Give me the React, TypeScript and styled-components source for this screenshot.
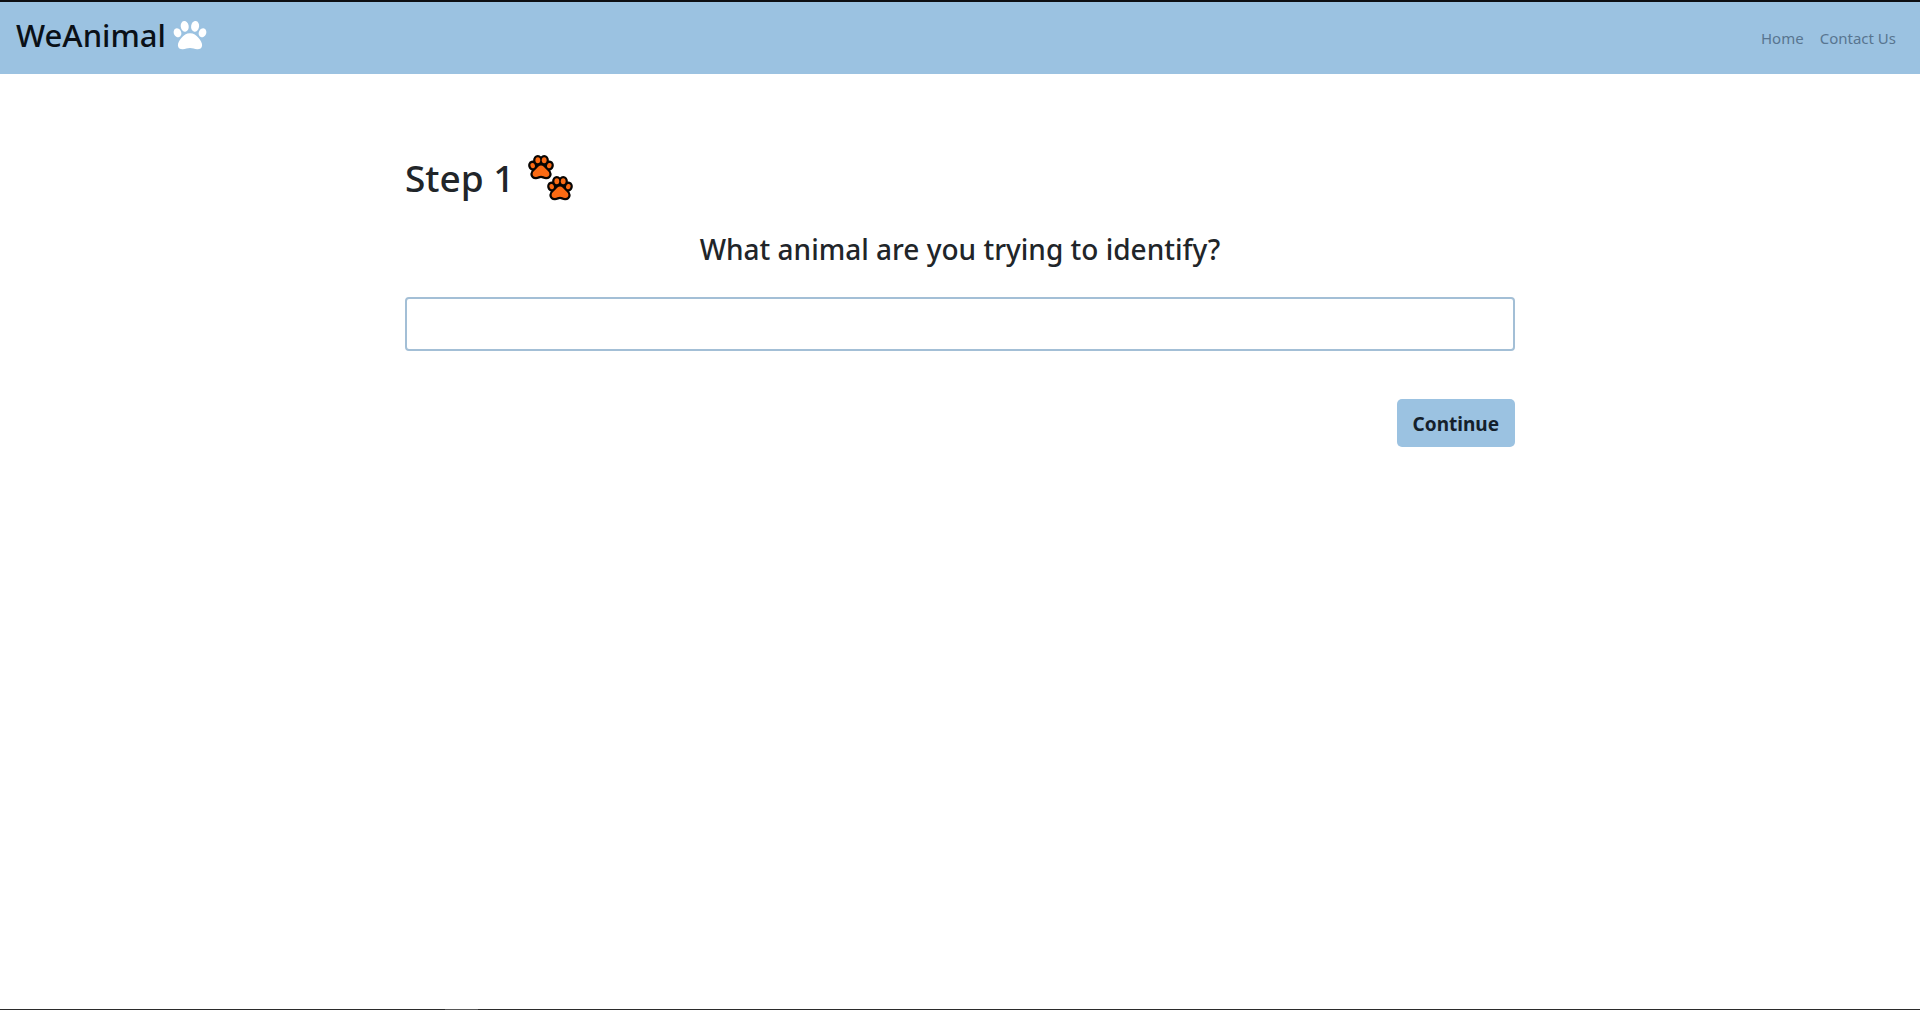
import React from "react";
import styled, { createGlobalStyle } from "styled-components";

const sky = "#9bc2e1";

const GlobalStyle = createGlobalStyle`
  *, *::before, *::after { box-sizing: border-box; }
  body {
    margin: 0;
    background: #fff;
    color: #212529;
    font-family: "Segoe UI", "Noto Sans", "Open Sans", sans-serif;
    font-size: 16px;
    line-height: 24px;
  }
`;

const Page = styled.div`
  min-height: 100vh;
  display: flex;
  flex-direction: column;
  border-top: 2px solid #0d0f12;
`;

const NavBar = styled.header`
  display: flex;
  align-items: center;
  justify-content: space-between;
  padding: 9px 16px 15px;
  background: ${sky};
`;

const Brand = styled.a`
  display: flex;
  align-items: center;
  gap: 7px;
  color: #0a1017;
  font-size: 31px;
  font-weight: 500;
  line-height: 48px;
  text-decoration: none;
`;

const NavLinks = styled.nav`
  display: flex;
  padding-top: 6px;
`;

const NavLink = styled.a`
  padding: 0 8px;
  color: #587590;
  font-size: 15px;
  font-weight: 400;
  text-decoration: none;
`;

const Main = styled.main`
  flex: 1;
  width: 100%;
  max-width: 1140px;
  margin: 0 auto;
  padding: 80px 15px 0;
`;

const StepTitle = styled.h1`
  display: flex;
  align-items: center;
  gap: 14px;
  margin: 0;
  font-size: 37px;
  font-weight: 500;
  line-height: 48px;
`;

const StepForm = styled.form`
  display: flex;
  flex-direction: column;
  padding-top: 24px;
`;

const Question = styled.label`
  margin-bottom: 25px;
  font-size: 28px;
  font-weight: 500;
  line-height: 46px;
  text-align: center;
`;

const AnswerInput = styled.input`
  width: 100%;
  height: 54px;
  padding: 8px 16px;
  border: 2px solid #a3bfd6;
  border-radius: 4px;
  background: #fff;
  color: inherit;
  font: inherit;
  font-size: 20px;
`;

const ContinueButton = styled.button`
  align-self: flex-end;
  margin-top: 48px;
  padding: 9px 16px 7px;
  border: 0;
  border-radius: 5px;
  background: ${sky};
  color: #14202b;
  font-family: inherit;
  font-size: 19px;
  font-weight: 700;
  line-height: 32px;
  cursor: pointer;
`;

const BottomEdge = styled.footer`
  display: flex;
  height: 1px;
  padding-left: 445px;
  background: #2b2b2b;
`;

const ActiveMark = styled.span`
  width: 33px;
  background: #575757;
`;

const BrandPaw = () => (
  <svg width="34" height="30" viewBox="0 0 34 30" fill="#fff" aria-hidden="true">
    <ellipse cx="11.7" cy="6.3" rx="4" ry="5.4" transform="rotate(-8 11.7 6.3)" />
    <ellipse cx="22.1" cy="6.3" rx="4" ry="5.4" transform="rotate(8 22.1 6.3)" />
    <ellipse cx="4.5" cy="12.8" rx="3.7" ry="4.6" transform="rotate(-22 4.5 12.8)" />
    <ellipse cx="29.5" cy="12.8" rx="3.7" ry="4.6" transform="rotate(22 29.5 12.8)" />
    <path d="M17 13.200c-3.600 0-6.300 2-8.400 4.500C6.600 20 4.700 22.600 4.900 25.500c.2 2.800 2.600 4 5 3.800 2.500-.2 4.400-1.300 7.100-1.300s4.600 1.100 7.100 1.300c2.400.2 4.800-1 5-3.800.2-2.900-1.700-5.500-3.700-7.800C23.300 15.200 20.600 13.200 17 13.200z" />
  </svg>
);

const PawPads = () => (
  <>
    <ellipse cx="4.7" cy="10.6" rx="2.2" ry="2.7" transform="rotate(-15 4.7 10.6)" />
    <ellipse cx="21.3" cy="10.6" rx="2.2" ry="2.7" transform="rotate(15 21.3 10.6)" />
    <ellipse cx="9.8" cy="5.3" rx="2.4" ry="3" />
    <ellipse cx="16.2" cy="5.3" rx="2.4" ry="3" />
    <path d="M13 10.600c-2 0-3.200 1.500-4.400 3-1.500 1.800-4 2.900-4 5.400 0 1.900 1.500 3.100 3.300 3 2-.1 3.200-1.300 5.100-1.300s3.100 1.200 5.100 1.300c1.800.1 3.300-1.100 3.300-3 0-2.500-2.500-3.600-4-5.400C16.200 12.100 15 10.600 13 10.600z" />
  </>
);

const PawShape = () => (
  <>
    <g fill="#080503" stroke="#080503" strokeWidth="4.600" strokeLinejoin="round">
      <PawPads />
    </g>
    <g fill="#fb6a13">
      <PawPads />
    </g>
  </>
);

const PawPrints = () => (
  <svg width="46" height="46" viewBox="0 0 46 46" aria-hidden="true">
    <PawShape />
    <g transform="translate(19 21)">
      <PawShape />
    </g>
  </svg>
);

export default function App() {
  return (
    <Page>
      <GlobalStyle />
      <NavBar>
        <Brand href="#">
          WeAnimal
          <BrandPaw />
        </Brand>
        <NavLinks>
          <NavLink href="#home">Home</NavLink>
          <NavLink href="#contact">Contact Us</NavLink>
        </NavLinks>
      </NavBar>
      <Main>
        <StepTitle>
          Step 1
          <PawPrints />
        </StepTitle>
        <StepForm onSubmit={(event) => event.preventDefault()}>
          <Question htmlFor="animal">What animal are you trying to identify?</Question>
          <AnswerInput id="animal" type="text" />
          <ContinueButton type="submit">Continue</ContinueButton>
        </StepForm>
      </Main>
      <BottomEdge>
        <ActiveMark />
      </BottomEdge>
    </Page>
  );
}
